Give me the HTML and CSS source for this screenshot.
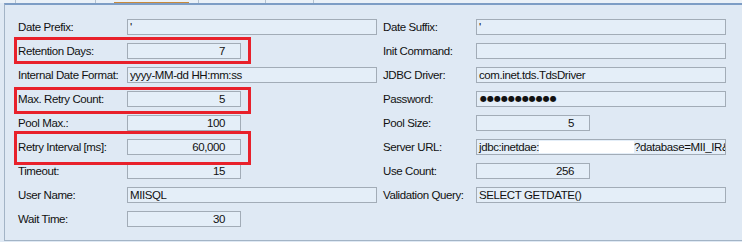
FILE: index.html
```html
<!DOCTYPE html>
<html lang="en">
<head>
    <meta charset="UTF-8">
    <title>Connection Settings</title>
    <link rel="stylesheet" href="styles.css">
</head>
<body>
    <div class="tabs">
        <div class="tab tab-first"></div>
        <div class="tab tab-active"></div>
        <div class="tab tab-mid"></div>
        <div class="tab tab-last"></div>
    </div>

    <div class="panel">
        <div class="form">
            <div class="label">Date Prefix:</div>
            <div class="field wide">'</div>
            <div class="label">Date Suffix:</div>
            <div class="field wide">'</div>

            <div class="label">Retention Days:</div>
            <div class="field short num">7</div>
            <div class="label">Init Command:</div>
            <div class="field wide"></div>

            <div class="label">Internal Date Format:</div>
            <div class="field wide">yyyy-MM-dd HH:mm:ss</div>
            <div class="label">JDBC Driver:</div>
            <div class="field wide">com.inet.tds.TdsDriver</div>

            <div class="label">Max. Retry Count:</div>
            <div class="field short num">5</div>
            <div class="label">Password:</div>
            <div class="field wide secret">●●●●●●●●●●●</div>

            <div class="label">Pool Max.:</div>
            <div class="field short num">100</div>
            <div class="label">Pool Size:</div>
            <div class="field short num">5</div>

            <div class="label">Retry Interval [ms]:</div>
            <div class="field short num">60,000</div>
            <div class="label">Server URL:</div>
            <div class="field wide">jdbc:inetdae:<span class="redacted"></span>?database=MII_IR&amp;s</div>

            <div class="label">Timeout:</div>
            <div class="field short num">15</div>
            <div class="label">Use Count:</div>
            <div class="field short num">256</div>

            <div class="label">User Name:</div>
            <div class="field wide">MIISQL</div>
            <div class="label">Validation Query:</div>
            <div class="field wide">SELECT GETDATE()</div>

            <div class="label">Wait Time:</div>
            <div class="field short num">30</div>
        </div>
    </div>

    <!-- highlight marks drawn over the form -->
    <div class="mark mark-retention"></div>
    <div class="mark mark-retry-count"></div>
    <div class="mark mark-retry-interval"></div>
</body>
</html>
```

FILE: styles.css
```css
body {
    margin: 0;
    width: 742px;
    height: 242px;
    overflow: hidden;
    background-color: #dfe9f4;
    font-family: "Liberation Sans", Arial, sans-serif;
    font-size: 11.5px;
    letter-spacing: -0.4px;
    color: #111;
    position: relative;
}
.tabs {
    height: 3px;
    display: flex;
    background-color: #eaf1f8;
}
.tab {
    height: 3px;
    box-sizing: border-box;
    border-left: 1px solid #b4c2d0;
}
.tab-first {
    margin-left: 15px;
    width: 80px;
}
.tab-active {
    width: 103px;
    background: linear-gradient(to right, transparent 18px, #c98a3a 18px, #c98a3a 93px, transparent 93px) bottom / 100% 1px no-repeat;
}
.tab-mid {
    width: 67px;
}
.tab-last {
    width: 49px;
    border-right: 1px solid #b4c2d0;
}
.panel {
    margin-left: 4px;
    height: 238px;
    box-sizing: border-box;
    border-top: 2px solid #7d9dc5;
    border-left: 1px solid #a3b4c6;
    border-bottom: 1px solid #a3b4c6;
    background-color: #dfe9f4;
    padding: 14px 0 0 13px;
}
.form {
    display: grid;
    grid-template-columns: 109px 250px 93px 250px;
    grid-auto-rows: 16px;
    row-gap: 8px;
}
.label {
    line-height: 16px;
    white-space: nowrap;
}
.form > .label:nth-child(4n+3) {
    margin-left: 6px;
}
.field {
    box-sizing: border-box;
    height: 16px;
    line-height: 14px;
    border: 1px solid #a2acb7;
    background-color: #e4eef8;
    padding: 0 2px;
    white-space: nowrap;
    overflow: hidden;
}
.form > .field:nth-child(4n+4) {
    margin-left: 6px;
}
.wide {
    width: 250px;
}
.short {
    width: 114px;
}
.num {
    text-align: right;
    padding-right: 15px;
}
.secret {
    font-family: "DejaVu Sans", sans-serif;
    font-size: 8px;
    letter-spacing: 0;
    padding-left: 3px;
}
.redacted {
    display: inline-block;
    width: 95px;
    height: 12px;
    vertical-align: -2px;
    background-color: #fff;
}
.mark {
    position: absolute;
    left: 14px;
    width: 237px;
    box-sizing: border-box;
    border: 3px solid #e8212b;
}
.mark-retention {
    top: 37px;
    height: 27px;
}
.mark-retry-count {
    top: 87px;
    height: 27px;
}
.mark-retry-interval {
    top: 131px;
    height: 34px;
}
```
